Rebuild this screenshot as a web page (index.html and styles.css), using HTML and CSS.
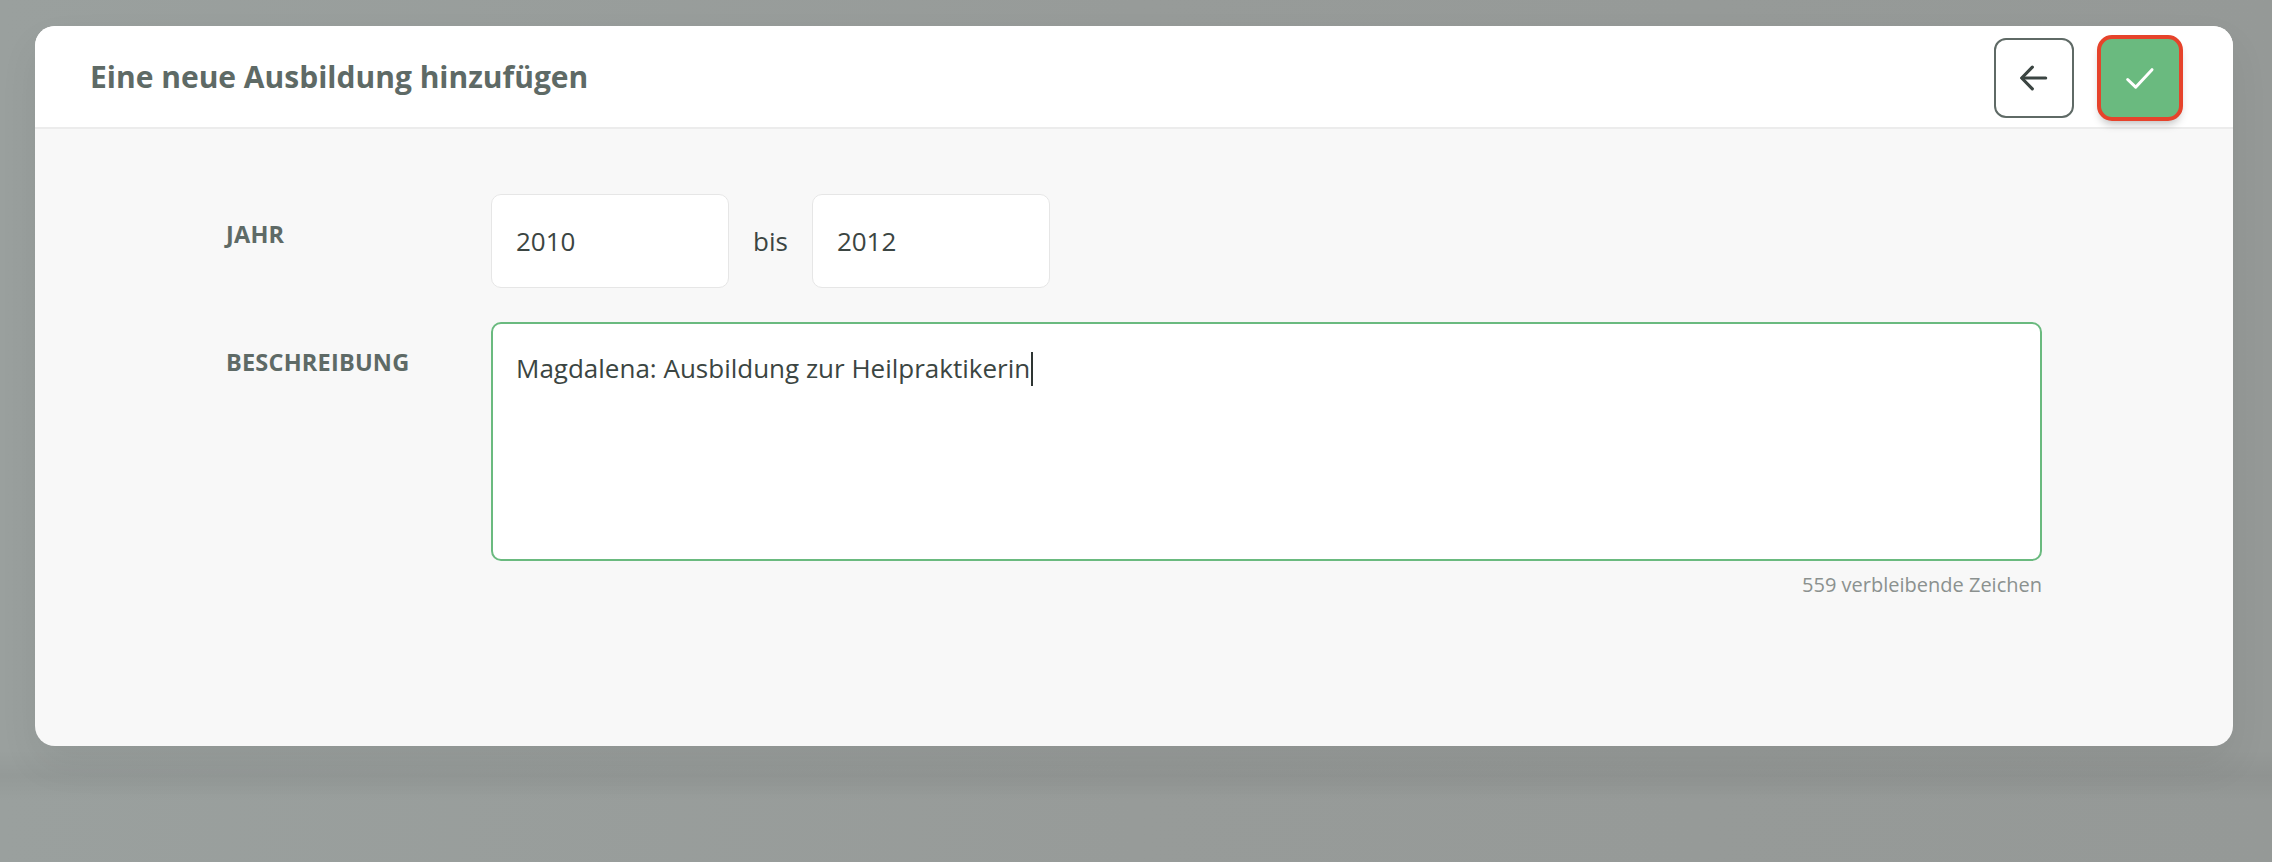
FILE: index.html
```html
<!DOCTYPE html>
<html lang="de">
<head>
    <meta charset="UTF-8">
    <meta name="viewport" content="width=device-width, initial-scale=1.0">
    <title>Ausbildung hinzufügen</title>
    <link rel="stylesheet" href="styles.css">
</head>
<body>
    <div class="backdrop">
        <div class="modal">
            <div class="modal-header">
                <h2>Eine neue Ausbildung hinzufügen</h2>
                <div class="actions">
                    <button class="btn btn-back" type="button" aria-label="Zurück">
                        <svg width="40" height="40" viewBox="0 0 24 24" fill="none" stroke="#3b4542" stroke-width="1.9" stroke-linecap="round" stroke-linejoin="round">
                            <path d="M19 12H5"/>
                            <path d="M11 5.5L4.6 12l6.4 6.5"/>
                        </svg>
                    </button>
                    <button class="btn btn-save" type="button" aria-label="Speichern">
                        <svg width="40" height="40" viewBox="0 0 24 24" fill="none" stroke="#ffffff" stroke-width="1.8" stroke-linecap="round" stroke-linejoin="round">
                            <path d="M4.6 12.9l4.8 4.6L19.2 7"/>
                        </svg>
                    </button>
                </div>
            </div>

            <div class="modal-body">
                <div class="form-row">
                    <label class="form-label">Jahr</label>
                    <div class="year-group">
                        <input class="field year" type="text" value="2010">
                        <span class="bis">bis</span>
                        <input class="field year" type="text" value="2012">
                    </div>
                </div>

                <div class="form-row">
                    <label class="form-label">Beschreibung</label>
                    <div class="desc-group">
                        <div class="field textarea">Magdalena: Ausbildung zur Heilpraktikerin<span class="caret"></span></div>
                        <div class="counter">559 verbleibende Zeichen</div>
                    </div>
                </div>
            </div>
        </div>
    </div>
</body>
</html>
```
FILE: styles.css
```css
* {
    margin: 0;
    padding: 0;
    box-sizing: border-box;
}

body {
    font-family: 'Open Sans', 'Noto Sans', sans-serif;
    background: #999d9b;
    height: 862px;
    overflow: hidden;
}

.backdrop {
    height: 100%;
    padding: 26px 39px 0 35px;
    background:
        linear-gradient(180deg, rgba(0, 0, 0, 0) 0%, rgba(0, 0, 0, 0) 87%, rgba(0, 0, 0, 0.04) 90%, rgba(0, 0, 0, 0) 93%),
        linear-gradient(90deg, #9aa09e 0%, #979b99 50%, #959997 100%);
}

.modal {
    height: 720px;
    background: #f8f8f8;
    border-radius: 20px;
    overflow: hidden;
    box-shadow: 0 18px 40px rgba(0, 0, 0, 0.06);
}

.modal-header {
    height: 103px;
    background: #fff;
    border-bottom: 2px solid #ececec;
    display: flex;
    align-items: center;
    justify-content: space-between;
    padding: 0 53px 0 55px;
}

.modal-header h2 {
    font-size: 30px;
    font-weight: 700;
    color: #5e6a66;
}

.actions {
    display: flex;
    align-items: center;
    gap: 26px;
    margin-top: 2px;
}

.btn {
    width: 80px;
    height: 80px;
    border-radius: 12px;
    display: flex;
    align-items: center;
    justify-content: center;
    cursor: pointer;
}

.btn-back {
    background: #fff;
    border: 2px solid #5f6a66;
}

.btn-save {
    background: #6aba7f;
    border: none;
    outline: 4px solid #e6432b;
    outline-offset: -1px;
    box-shadow: 0 6px 8px rgba(0, 0, 0, 0.25);
}

.modal-body {
    padding: 65px 191px 0;
    display: flex;
    flex-direction: column;
    gap: 34px;
}

.form-row {
    display: grid;
    grid-template-columns: 265px 1fr;
}

.form-label {
    padding-top: 25px;
    font-size: 23.5px;
    line-height: 30px;
    font-weight: 700;
    text-transform: uppercase;
    color: #5e6a66;
    letter-spacing: 0.2px;
}

.year-group {
    display: flex;
    align-items: center;
}

.field {
    background: #fff;
    border: 1px solid #e6e6e6;
    border-radius: 10px;
    font-family: 'Open Sans', 'Noto Sans', sans-serif;
    font-size: 26px;
    color: #3b4542;
}

.year {
    width: 238px;
    height: 94px;
    padding: 0 24px;
    outline: none;
}

.bis {
    font-size: 26px;
    color: #3b4542;
    padding: 0 24px;
}

.textarea {
    height: 239px;
    border: 2px solid #6aba7f;
    padding: 26px 23px;
    line-height: 36px;
}

.caret {
    display: inline-block;
    width: 2px;
    height: 34px;
    background: #2e3533;
    vertical-align: -8px;
    margin-left: 1px;
}

.counter {
    margin-top: 10px;
    text-align: right;
    font-size: 20px;
    line-height: 28px;
    color: #8b918f;
}
```
